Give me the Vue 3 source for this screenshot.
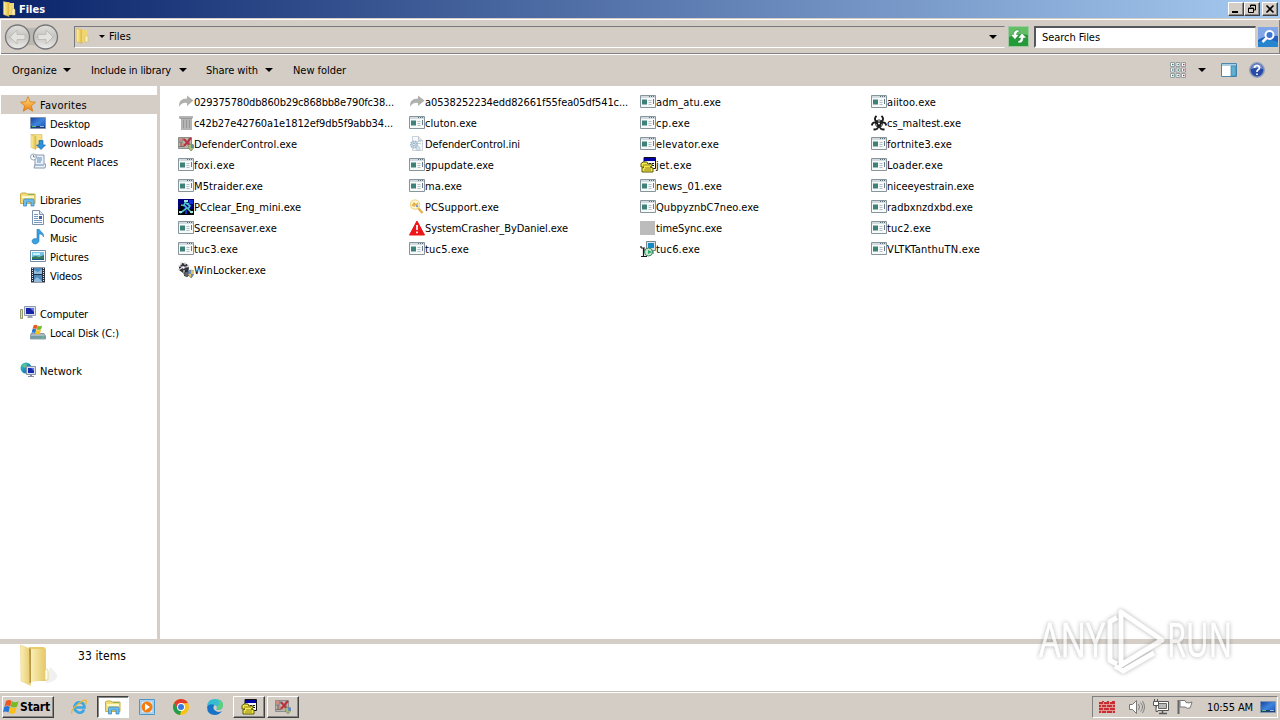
<script setup>
const vFit = {
  mounted(el, { value }) {
    const natural = el.getBoundingClientRect().width
    el.style.letterSpacing = (value - natural) / el.textContent.length + 'px'
  }
}
const menu = [
  { t: 'Organize', w: 45, arrow: true },
  { t: 'Include in library', w: 80, arrow: true },
  { t: 'Share with', w: 52, arrow: true },
  { t: 'New folder', w: 53 }
]
const groups = [
  { t: 'Favorites', w: 47, i: 'star', sel: true, items: [['Desktop', 40, 'desktop'], ['Downloads', 53, 'downloads'], ['Recent Places', 68, 'recent']] },
  { t: 'Libraries', w: 41, i: 'library', items: [['Documents', 54, 'doc'], ['Music', 27, 'music'], ['Pictures', 39, 'picture'], ['Videos', 32, 'video']] },
  { t: 'Computer', w: 48, i: 'computer', items: [['Local Disk (C:)', 69, 'disk']] },
  { t: 'Network', w: 42, i: 'network', items: [] }
]
const files = [
  ['029375780db860b29c868bb8e790fc38...', 200, 'arrow'], ['a0538252234edd82661f55fea05df541c...', 203, 'arrow'], ['adm_atu.exe', 65, 'exe'], ['aiitoo.exe', 49, 'exe'],
  ['c42b27e42760a1e1812ef9db5f9abb34...', 199, 'bin'], ['cluton.exe', 52, 'exe'], ['cp.exe', 34, 'exe'], ['cs_maltest.exe', 74, 'bio'],
  ['DefenderControl.exe', 103, 'defender'], ['DefenderControl.ini', 95, 'ini'], ['elevator.exe', 63, 'exe'], ['fortnite3.exe', 65, 'exe'],
  ['foxi.exe', 41, 'exe'], ['gpupdate.exe', 69, 'exe'], ['jet.exe', 36, 'jet'], ['Loader.exe', 56, 'exe'],
  ['M5traider.exe', 69, 'exe'], ['ma.exe', 37, 'exe'], ['news_01.exe', 66, 'exe'], ['niceeyestrain.exe', 87, 'exe'],
  ['PCclear_Eng_mini.exe', 107, 'pcclear'], ['PCSupport.exe', 74, 'support'], ['QubpyznbC7neo.exe', 103, 'exe'], ['radbxnzdxbd.exe', 86, 'exe'],
  ['Screensaver.exe', 83, 'exe'], ['SystemCrasher_ByDaniel.exe', 143, 'warn'], ['timeSync.exe', 66, 'gray'], ['tuc2.exe', 44, 'exe'],
  ['tuc3.exe', 44, 'exe'], ['tuc5.exe', 44, 'exe'], ['tuc6.exe', 44, 'setup'], ['VLTKTanthuTN.exe', 93, 'exe'],
  ['WinLocker.exe', 72, 'locker']
]
const tasks = [['ie', ''], ['library', 'active'], ['wmp', ''], ['chrome', ''], ['edge', ''], ['jet', 'raised'], ['defender', 'raised']]
</script>

<template>
  <div class="screen">
    <svg class="defs" width="0" height="0">
      <defs>
        <linearGradient id="gy" x1="0" x2="1"><stop offset="0" stop-color="#fff3a8" /><stop offset="1" stop-color="#dfb93e" /></linearGradient>
        <linearGradient id="gf" x1="0" x2="1"><stop offset="0" stop-color="#faeeb4" /><stop offset="1" stop-color="#e6cb70" /></linearGradient>
        <linearGradient id="gb" x1="0" y1="0" x2="1" y2="1"><stop offset="0" stop-color="#173f9c" /><stop offset=".5" stop-color="#3f85dc" /><stop offset="1" stop-color="#1a4fae" /></linearGradient>
        <linearGradient id="gs" x1="0" y1="0" x2="0" y2="1"><stop offset="0" stop-color="#ffe27a" /><stop offset="1" stop-color="#ee7d12" /></linearGradient>
        <linearGradient id="gn" x1="0" y1="0" x2="0" y2="1"><stop offset="0" stop-color="#e2e0dc" /><stop offset=".5" stop-color="#c6c4c0" /><stop offset="1" stop-color="#eeeeec" /></linearGradient>
        <linearGradient id="ge" x1="0" y1="0" x2="1" y2="1"><stop offset="0" stop-color="#37c7c4" /><stop offset="1" stop-color="#0b5cb8" /></linearGradient>
      </defs>
      <symbol id="folder" viewBox="0 0 16 16"><path d="M2 1h5l1 1h4v12H7z" fill="#f2d873" /><path d="M1.500.5l5.500 1.500v13.500l-5.500-2z" fill="url(#gy)" stroke="#d4b350" stroke-width=".5" /><path d="M7 2h4v12H7z" fill="#f0d573" /><path d="M10 8q3-1 3 1v5h-3z" fill="#faf0bd" stroke="#cfb353" stroke-width=".5" /></symbol>
      <symbol id="star" viewBox="0 0 16 16"><path d="M8 .7l2.100 5 5.400.5-4.100 3.600 1.300 5.400L8 12.300l-4.700 2.900 1.300-5.400L.5 6.200l5.400-.5z" fill="url(#gs)" stroke="#d47d1c" stroke-width=".8" /></symbol>
      <symbol id="desktop" viewBox="0 0 16 16"><path d="M.5 2.500h15v11H.5z" fill="url(#gb)" stroke="#8495b4" /><path d="M1 11h14v2H1z" fill="#1d3e76" /><path d="M2 11h4v1H2z" fill="#54c66c" /><path d="M10 11h4v1h-4z" fill="#9cbbe1" /></symbol>
      <symbol id="downloads" viewBox="0 0 16 16"><path d="M1 .5h11v13H5z" fill="#f5df87" stroke="#d7b95a" stroke-width=".6" /><path d="M1 .5l5 2v13l-5-2z" fill="url(#gy)" stroke="#d4b350" stroke-width=".5" /><path d="M9 6.500h4V11h2.500L11 15.500 6.500 11H9z" fill="#2e91db" stroke="#1767a8" stroke-width=".7" /></symbol>
      <symbol id="recent" viewBox="0 0 16 16"><path d="M5 2h9v9h2l-1 4H4l1-4z" fill="#edf2f8" stroke="#8798ad" /><path d="M7 5h5M7 7h5M7 9h4M5 12h9" stroke="#5e89bd" /><circle cx="3.500" cy="4" r="3" fill="#fff" stroke="#91a4ba" /><path d="M3.500 2v2h2" fill="none" stroke="#4e6987" stroke-width=".8" /></symbol>
      <symbol id="library" viewBox="0 0 16 16"><path d="M.5 12.500V3l1-1H6l1 1h8v9.500z" fill="#f2dc79" stroke="#c8ac46" /><path d="M2 5h12v2H2z" fill="#fff8cb" /><path d="M8 3h6v1H8z" fill="#80b65e" /><path d="M3.500 15V9.500Q3.500 8 5 8h7.500Q14 8 14 9.500V15h-3v-4H6.500v4z" fill="#6dbcec" stroke="#388ac1" stroke-width=".8" /></symbol>
      <symbol id="doc" viewBox="0 0 16 16"><path d="M2.500.5h7l4 4v10h-11z" fill="#fafcff" stroke="#7b91ad" /><path d="M9.500.5v4h4" fill="#d6e4f5" stroke="#7b91ad" /><path d="M4 4.500h4M4 6.500h4M4 8.500h4M4 10.500h8M4 12.500h8" stroke="#7697bf" /><path d="M9 6h3v3H9z" fill="#3c66a3" /></symbol>
      <symbol id="music" viewBox="0 0 16 16"><path d="M7 0h2c1 3 5 3 4.500 8-1-3-3-3-4.500-3v7c-1 4-7 4-7 0 0-2 3-3 5-2z" fill="#3aa0e0" stroke="#2178b8" stroke-width=".6" /></symbol>
      <symbol id="picture" viewBox="0 0 16 16"><path d="M.5 2.500h15v11H.5z" fill="#fff" stroke="#718ba9" /><path d="M2 4h12v8H2z" fill="#76c4e6" /><path d="M2 9l4-1 3 1 5-2v5H2z" fill="#367b5b" /><path d="M2 11h12v1H2z" fill="#185987" /><path d="M3 5h7v2H3z" fill="#c9eff7" /></symbol>
      <symbol id="video" viewBox="0 0 16 16"><path d="M1 .5h14v15H1z" fill="#29323e" /><path d="M4 1h8v6H4zM4 8h8v7H4z" fill="#4b8bbf" /><path d="M4 3l4 2 4-3v5H4zM4 13l3-3 5 4v1H4z" fill="#8ebbdc" /><path d="M2.500 1v14M13.500 1v14" stroke="#e1e7ed" stroke-width="1" stroke-dasharray="1 1" /></symbol>
      <symbol id="computer" viewBox="0 0 16 16"><path d="M.5 4.500h2v9h-2z" fill="#d8dfbf" stroke="#92996e" /><path d="M4.500 1.500h11v9h-11z" fill="#dce1ed" stroke="#8d98b1" /><path d="M6 3h8v6H6z" fill="#1724a5" /><path d="M10 3h4v4z" fill="#6178e0" /><path d="M8 11h4l1 2H7z" fill="#9ba5b7" /></symbol>
      <symbol id="disk" viewBox="0 0 16 16"><path d="M1 9.500h13l1.500 2.500v3H.5v-3z" fill="#a9bac2" stroke="#6c808a" stroke-width=".7" /><path d="M1 12h14v2.500H1z" fill="#729ba2" /><path d="M12 12.500h2v1h-2z" fill="#56da75" /><use href="#win" x="1.500" y="0" width="11" height="11" /></symbol>
      <symbol id="win" viewBox="0 0 16 16"><path d="M3 2q3-2 5.700 0L7.200 7.500Q4 5.500 1.500 7.500z" fill="#ed5724" /><path d="M9 2.200q3 2 6.500 0L14 7.800q-3.500 1.500-6.500 0z" fill="#78b928" /><path d="M1.200 8q3-2 5.700 0L5.400 13.500Q2 11.500 0 13.500z" fill="#2676d6" /><path d="M7.200 8.300q3 2 6.500 0L12.300 14q-3 1.500-6.500 0z" fill="#fbbf17" /></symbol>
      <symbol id="network" viewBox="0 0 16 16"><circle cx="6" cy="6" r="5.500" fill="url(#ge)" /><path d="M2 3l4-2 1 3-2 2-2-1zM7 7h3l-2 4H6z" fill="#5fc38a" /><path d="M6.500 4.500h9v8h-9z" fill="#d9e1ef" stroke="#8391ab" /><path d="M8 6h6v5H8z" fill="#1a2cae" /><path d="M11 6h3v3z" fill="#6178e0" /><path d="M10 13h2v1h2v1H8v-1h2z" fill="#7f8da7" /></symbol>
      <symbol id="exe" viewBox="0 0 16 16"><path d="M.5 1.500h15v12H.5z" fill="#f8fafa" stroke="#87949c" /><path d="M1 2h14v2H1z" fill="#d2dce0" /><path d="M9 2.500h1M11 2.500h1M13 2.500h1" stroke="#5a6e78" /><path d="M2 5.500h5v5H2z" fill="#3c8278" /><path d="M8.500 6.500h3M8.500 8.500h3M8.500 10.500h3" stroke="#b2bec9" /><path d="M13.500 5v5" stroke="#687987" /></symbol>
      <symbol id="arrow" viewBox="0 0 16 16"><path d="M9 1.500l6.500 5L9 12V9Q4 8 1 13 0 4.500 9 4.500z" fill="#b0b0ae" /></symbol>
      <symbol id="bin" viewBox="0 0 16 16"><path d="M1 1h14v2.500h-1V15H3V3.500H1z" fill="#b4b4b4" /><path d="M2 3.500h12M5.500 5v8M8.500 5v8M11.500 5v8" stroke="#979797" /></symbol>
      <symbol id="bio" viewBox="0 0 16 16"><g fill="none" stroke="#1c1c1c"><path d="M5.500.8Q2.500 4 5.200 6.300 8 8.500 10.800 6.300 13.500 4 10.500.8" stroke-width="1.900" /><path d="M.8 10.500Q1.500 6.800 4.500 7.500 8 9 7 12.500 6 15 2.500 14.300" stroke-width="1.900" /><path d="M15.200 10.500Q14.500 6.800 11.500 7.500 8 9 9 12.500 10 15 13.500 14.300" stroke-width="1.900" /><circle cx="8" cy="8.500" r="3.600" stroke-width=".9" /></g><circle cx="8" cy="8.300" r=".9" fill="#fff" /></symbol>
      <symbol id="defender" viewBox="0 0 16 16"><path d="M.5 1.500h13v11H.5z" fill="#b9b7b3" stroke="#8d8e88" /><path d="M1 2h4v3H1zM2 7h4v3H2z" fill="#cd8e83" /><path d="M1 6h4M1 10.500h5M5 2v3M3 6v4M11 2v9" stroke="#77716b" /><path d="M6 3l7 8M13 2l-7 8" stroke="#bd3040" stroke-width="2" /><path d="M10 9l3-1 3 1q0 4-3 6-3-2-3-6z" fill="#a8bd71" stroke="#68775a" stroke-width=".5" /><path d="M13 8l3 1v3h-3z" fill="#6489bd" /></symbol>
      <symbol id="ini" viewBox="0 0 16 16"><path d="M3.500.5h6l4 4v10h-10z" fill="#f8f9fb" stroke="#bfc6cf" stroke-width=".8" /><path d="M9.500.5v4h4" fill="#e1e6ec" stroke="#b4bec9" stroke-width=".8" /><path d="M7 5.500h5M8 7.500h4" stroke="#cbd3dc" /><circle cx="5" cy="8.500" r="3.200" fill="#d6e5f0" stroke="#9ab5ca" stroke-width="1.700" stroke-dasharray="1.500 .7" /><circle cx="5" cy="8.500" r="1.200" fill="#fff" stroke="#718fa9" stroke-width=".7" /><circle cx="9" cy="12.500" r="2" fill="#d8e5ee" stroke="#9db5c8" stroke-dasharray="1 .6" /></symbol>
      <symbol id="jet" viewBox="0 0 16 16"><path d="M4 .5h11.500v11H4z" fill="#f7f7f7" stroke="#111" /><path d="M4 1h11v3H4z" fill="#0000a6" /><path d="M6 6.500h2M9 6.500h2M12 6.500h2M12 8.500h2" stroke="#111" /><path d="M1 6.500l2-1.500h4l1 2h4v2l-2 1 3 1v4H2v-4l2-1H1z" fill="#f5e94e" stroke="#5d5600" /><path d="M3 8h7M5 11h6M4 13h7" stroke="#8e8519" /></symbol>
      <symbol id="pcclear" viewBox="0 0 16 16"><path d="M0 0h16v16H0z" fill="#00007f" /><path d="M0 10h16v6H0zM2 5h4v5H2z" fill="#020407" /><path d="M8 2l-2 4 3 3-4 3-3 2M8 4l4 3-2 3 4 4M3 6l5 1M9 5l4-1" fill="none" stroke="#50c4cd" stroke-width="1.600" /><path d="M6 1h4v2H6zM1 12h3v2H1zM12 12h3v2h-3z" fill="#a5e3df" /><path d="M11 1h4v4h-4zM7 11h2v4H7z" fill="#1330d6" /></symbol>
      <symbol id="support" viewBox="0 0 16 16"><path d="M9 9l4.500 5" stroke="#e4b24e" stroke-width="2.500" /><circle cx="6" cy="5.500" r="4.600" fill="#fff9da" stroke="#f0d792" stroke-width="1.300" /><path d="M3 7l2-3 2 2 2-2M5 4v4" fill="none" stroke="#e3ad36" stroke-width="1.300" /><circle cx="8" cy="7" r="1.300" fill="#8aa2b5" /></symbol>
      <symbol id="warn" viewBox="0 0 16 16"><path d="M8 1l7.500 14H.5z" fill="#ec1519" stroke="#ec1519" stroke-linejoin="round" /><path d="M8 5v5M8 11.500v1.800" stroke="#fff" stroke-width="1.700" /></symbol>
      <symbol id="gray" viewBox="0 0 16 16"><path d="M0 1h15v14H0z" fill="#bcbcbc" /></symbol>
      <symbol id="setup" viewBox="0 0 16 16"><path d="M6.500.5h9v9h-9z" fill="#dce1e4" stroke="#71838c" /><path d="M8 2h6v5H8z" fill="#178ac4" /><path d="M8 10h6v3H8z" fill="#aaa" /><circle cx="8.500" cy="11" r="4" fill="#c6e6ce" stroke="#318863" /><path d="M8 9l4 2-4 2z" fill="#28a965" /><path d="M1 7h4M3.500 7v8M1 15.500h6M5 9H3M1 5v2" fill="none" stroke="#181818" stroke-width="1.200" /></symbol>
      <symbol id="locker" viewBox="0 0 16 16"><path d="M1 5l3-4 5 1 2 4-1 5-5 0-4-3z" fill="#33343a" /><path d="M0 4h3M3 0v3M7 0v3M11 3l-2 2M0 8l4-2M6 12V8M3 5h2M7 5h2" stroke="#d5d7dc" stroke-width="1.200" /><circle cx="5.500" cy="5.500" r="1.300" fill="#fff" /><circle cx="8.500" cy="12" r="2.500" fill="#62646a" stroke="#111" stroke-dasharray="1.500 1" /><path d="M10 9l3-1 3 1q0 5-3 7-3-2-3-7z" fill="#6b8fc6" stroke="#4c5b6e" stroke-width=".5" /><path d="M13 8l3 1v3h-3zM10 12h3v4z" fill="#e5c75b" /></symbol>
      <symbol id="ie" viewBox="0 0 16 16"><path d="M13 10.500Q11.500 14.500 7.500 13.500 2.500 11.500 3.500 7 5.500 2.500 10 3.500 13.500 4.500 13.500 8.500H4" fill="none" stroke="#3aa7e4" stroke-width="2.600" /><path d="M1 15q-2-3 5-9T15.200 1.500q1 2-1.500 4" fill="none" stroke="#e9b834" stroke-width="1.300" /></symbol>
      <symbol id="wmp" viewBox="0 0 16 16"><path d="M.5.5h15v15H.5z" fill="#c6e1f5" stroke="#4c96c8" /><path d="M2 2h12v12H2z" fill="#dceefa" stroke="#72afd7" stroke-width=".7" /><circle cx="8" cy="8" r="5.500" fill="#f27e13" /><path d="M6 4.500l5 3.500-5 3.500z" fill="#fff" /></symbol>
      <symbol id="chrome" viewBox="0 0 16 16"><circle cx="8" cy="8" r="8" fill="#fbc116" /><path d="M1 4q2.500-4 7-4t7 4l-7 .5L4.500 10z" fill="#e33b2e" /><path d="M1 4l4 6 3 2-1 4Q1 15 0 9-.2 6 1 4z" fill="#249d4b" /><circle cx="8" cy="8" r="4" fill="#fff" /><circle cx="8" cy="8" r="3" fill="#3979df" /></symbol>
      <symbol id="edge" viewBox="0 0 16 16"><path d="M.2 8Q0 0 8 0q8 .2 8 6 0 5-5 5-2 0-1.500-1Q11 6 6 6q-4 0-6 3z" fill="#37bdd0" /><path d="M.1 8Q0 16 8 16q4 0 7-4-4 2-7-.5Q5 9 7.500 6 2 4 .1 8z" fill="#1673c7" /><path d="M11 .7q5 1.300 5 5.300t-5 5q-2 0-1.500-1 2-1 1-3 3-2 .5-6.300z" fill="#62ce79" /></symbol>
      <symbol id="wall" viewBox="0 0 16 14"><path d="M0 2h3V1h2v1h3V1h2v1h3V1h3v12H0z" fill="#c82d33" /><path d="M0 4.500h16M0 7.500h16M0 10.500h16M4.500 2v2M10.500 2v2M2.500 5v2M7.500 5v2M13.500 5v2M4.500 8v2M10.500 8v2M2.500 11v2M7.500 11v2M13.500 11v2" stroke="#eec8bc" stroke-width=".7" /></symbol>
      <symbol id="sound" viewBox="0 0 16 16"><path d="M.5 5.500h3l4-4v13l-4-4h-3z" fill="#fff" stroke="#777" /><path d="M9.500 5q2 3 0 6M11.500 3.500q4 4.500 0 9M13.500 2q4 6 0 12" fill="none" stroke="#777" stroke-width=".9" /></symbol>
      <symbol id="lan" viewBox="0 0 16 16"><path d="M3.500 2.500h12v9h-12z" fill="#fff" stroke="#555" /><path d="M5.500 4.500h8v5h-8z" fill="#b9b9b7" stroke="#666" /><path d="M9.500 12v2M6 14.500h8" stroke="#555" stroke-width="1.500" /><path d="M.5 2.500h5v4h-5zM1.500 0v2M4.500 0v2M3 7v5.500h2" fill="#fff" stroke="#555" /></symbol>
      <symbol id="flag" viewBox="0 0 16 16"><path d="M1.500 1v14" stroke="#666" stroke-width="2" /><path d="M3 1.500h5l1 2q3 1 6-.5-1 4-2 6-3 1-5-1H3z" fill="#fff" stroke="#777" /></symbol>
    </svg>

    <header class="title">
      <svg class="ic" viewBox="0 0 16 16"><use href="#folder" /></svg><b v-fit="26">Files</b>
      <div class="wb">
        <i><svg viewBox="0 0 12 10"><path d="M2 8h6" stroke="#000" stroke-width="2" /></svg></i>
        <i><svg viewBox="0 0 12 10"><path d="M4.500 3V1h5v5h-2M4 1.500h6M2.500 4v4.500h5V4zM2 4.500h6" fill="none" stroke="#000" /></svg></i>
        <i class="x"><svg viewBox="0 0 12 10"><path d="M2.500 1.500l7 7M9.500 1.500l-7 7" stroke="#000" stroke-width="1.600" /></svg></i>
      </div>
    </header>

    <div class="nav">
      <svg class="backs" width="56" height="28" viewBox="0 0 56 28">
        <path d="M13 3q14 4 29 0v21q-14-4-29 0z" fill="#bbb7b1" />
        <g fill="url(#gn)" stroke="#77777a" stroke-width="1.300"><circle cx="13.500" cy="14" r="12" /><circle cx="41.500" cy="14" r="12" /></g>
        <g fill="#e4e2df" stroke="#b3b1ad" stroke-width=".7"><path d="M13 7l-7 7 7 7v-4.500h8v-5h-8zM42 7l7 7-7 7v-4.500h-8v-5h8z" /></g>
      </svg>
      <div class="addr"><svg class="ic" viewBox="0 0 16 16"><use href="#folder" /></svg><s class="tri small"></s><span v-fit="22">Files</span><s class="tri end"></s></div>
      <svg class="refresh" width="21" height="21" viewBox="0 0 21 21"><path d="M.5.5h20v20H.5z" fill="#249b38" stroke="#9fc9a2" /><path d="M1 1h19v8Q10 6 1 11z" fill="#63bf65" /><path d="M11 4Q5.500 3.500 5.500 8.500H2.500L7 13.500l4-5H8.500Q8.500 6 11 6zM10 17q5.500.5 5.500-5h3L14 7l-4 5h2.500q0 3-2.500 3z" fill="#fff" stroke="#21833a" stroke-width=".5" /></svg>
      <div class="search"><span v-fit="58">Search Files</span></div>
      <svg class="mag" width="20" height="20" viewBox="0 0 20 20"><path d="M0 0h20v20H0z" fill="#2360c4" /><path d="M0 0h20v9Q10 7 0 13z" fill="#80a6e7" /><path d="M0 15q10-4 20 0v5H0z" fill="#2784cf" /><circle cx="11.500" cy="8" r="4" fill="#3c73d4" stroke="#fff" stroke-width="2" /><path d="M8.500 11l-4 4" stroke="#fff" stroke-width="2.500" /></svg>
    </div>

    <div class="tools">
      <div v-for="m in menu" :key="m.t" class="m"><span v-fit="m.w">{{ m.t }}</span><s v-if="m.arrow" class="tri"></s></div>
      <div class="views">
        <svg width="16" height="16" viewBox="0 0 16 16"><g fill="#fff" stroke="#8f9698" stroke-width=".9"><path d="M.5.5h4v4h-4zM6 .5h4v4H6zM11.500.5h4v4h-4zM.5 6h4v4h-4zM6 6h4v4H6zM11.500 6h4v4h-4zM.5 11.500h4v4h-4zM6 11.500h4v4H6zM11.500 11.500h4v4h-4z" /></g><path d="M2 2.500h1.500M7.500 8H9M2 13.500h1.500" stroke="#388269" stroke-width="1.500" /><path d="M7.500 2.500H9M2 8h1.500M7.500 13.500H9" stroke="#56778c" stroke-width="1.500" /><path d="M13 2.500h1.500M13 8h1.500M13 13.500h1.500" stroke="#a33740" stroke-width="1.500" /></svg>
        <s class="tri"></s>
        <svg width="16" height="14" viewBox="0 0 16 14"><path d="M.5.5h15v13H.5z" fill="#fff" stroke="#4c86aa" /><path d="M1 1h14v2H1z" fill="#a9cee2" /><path d="M10 3h5v10h-5z" fill="#62afd4" stroke="#317fa9" stroke-width=".7" /></svg>
        <svg class="help" width="16" height="16" viewBox="0 0 16 16"><circle cx="8" cy="8" r="7.200" fill="#2949a8" stroke="#8e9db9" stroke-width="1.500" /><path d="M2 7q1-5 6-5t6 5q-6-2-12 0z" fill="#7790d1" /><path d="M5.500 6q0-2.500 2.500-2.500T10.500 6Q10.500 7 8.800 8 8 8.500 8 10M8 11.500V13" fill="none" stroke="#fff" stroke-width="1.700" /></svg>
      </div>
    </div>

    <main class="body">
      <aside>
        <section v-for="g in groups" :key="g.t">
          <div class="row" :class="{ sel: g.sel }"><svg class="ic" viewBox="0 0 16 16"><use :href="'#' + g.i" /></svg><span v-fit="g.w">{{ g.t }}</span></div>
          <div v-for="c in g.items" :key="c[0]" class="row child"><svg class="ic" viewBox="0 0 16 16"><use :href="'#' + c[2]" /></svg><span v-fit="c[1]">{{ c[0] }}</span></div>
        </section>
      </aside>
      <div class="files">
        <div v-for="f in files" :key="f[0]" class="file"><svg class="ic" viewBox="0 0 16 16"><use :href="'#' + f[2]" /></svg><span v-fit="f[1]">{{ f[0] }}</span></div>
      </div>
    </main>

    <footer class="details">
      <svg width="42" height="44" viewBox="0 0 42 44"><path d="M27 37l4-14q10 8 6 12-3 3-10 4z" fill="#ddd" opacity=".45" /><path d="M10 3h15l2 2v32H10z" fill="#e9cd6c" /><path d="M1.500 1l10 4v36.500L2 37z" fill="url(#gf)" stroke="#ead38a" stroke-width=".6" /><path d="M10 4l2 1v34h-1.500z" fill="#b99843" /><path d="M12 5h13.500v31L12 38z" fill="url(#gf)" /><path d="M26 26q3-2 3 1v9h-3z" fill="#fffdee" stroke="#decb74" stroke-width=".7" /></svg>
      <span v-fit="48">33 items</span>
    </footer>

    <nav class="taskbar">
      <div class="start"><svg width="16" height="16" viewBox="0 0 16 16"><use href="#win" /></svg><b v-fit="30">Start</b></div>
      <div v-for="t in tasks" :key="t[0]" class="task" :class="t[1]"><svg class="ic" viewBox="0 0 16 16"><use :href="'#' + t[0]" /></svg></div>
      <div class="tray">
        <svg class="t1" width="16" height="14"><use href="#wall" /></svg>
        <svg class="t2" width="16" height="16"><use href="#sound" /></svg>
        <svg class="t3" width="16" height="16"><use href="#lan" /></svg>
        <svg class="t4" width="16" height="16"><use href="#flag" /></svg>
        <span v-fit="46">10:55 AM</span>
        <svg class="t5" width="16" height="16"><use href="#desktop" /></svg>
      </div>
    </nav>

    <svg class="mark" width="206" height="72" viewBox="0 0 206 72">
      <g class="letters"><text x="6" y="53" textLength="66" lengthAdjust="spacingAndGlyphs">ANY</text><text x="134" y="53" textLength="65" lengthAdjust="spacingAndGlyphs">RUN</text></g>
      <g class="logo"><path d="M84 13.500l-7 4v39l7 3.500" /><path d="M88 63V8l41 28-41 25" /><path d="M82 62l8 5 31-18" /></g>
    </svg>
  </div>
</template>

<style>
body { margin: 0; overflow: hidden; }
</style>
<style scoped>
.screen { position: relative; width: 1280px; height: 720px; overflow: hidden; display: flex; flex-direction: column; background: #fff; color: #000; font: 11px/15px "DejaVu Sans Condensed", "DejaVu Sans", sans-serif; font-stretch: condensed; }
.defs { position: absolute; }
span, b { white-space: nowrap; display: inline-block; flex: none; }
svg { flex: none; display: block; }
.ic { width: 16px; height: 16px; }
.title { height: 18px; flex: none; display: flex; align-items: center; padding: 0 2px; background: linear-gradient(90deg, #0a246a, #a6caf0); color: #fff; box-sizing: border-box; }
.title b { margin-left: 1px; }
.wb { display: flex; margin-left: auto; }
.wb i { width: 16px; height: 14px; box-sizing: border-box; background: #d4cec7; border: 1px solid; border-color: #fff #404040 #404040 #fff; box-shadow: inset -1px -1px #888; }
.wb i svg { width: 12px; height: 10px; margin: 1px; }
.wb .x { margin-left: 2px; }
.nav { height: 37px; flex: none; box-sizing: border-box; background: #d4cdc6; border-top: 1px solid #d4cdc6; border-bottom: 1px solid #fff; box-shadow: inset 0 1px #fff, inset 1px 0 #fff, inset 0 -1px #808080, inset -1px 0 #808080; display: flex; align-items: center; padding-left: 4px; }
.addr { width: 931px; height: 22px; margin-left: 14px; box-sizing: border-box; border: 1px solid; border-color: #77797c #d4cdc6 #fff #77797c; display: flex; align-items: center; }
.addr span { margin-left: 4px; }
.addr .ic { margin-bottom: 2px; }
.tri { width: 0; height: 0; border: 4px solid transparent; border-top-color: #000; border-bottom: 0; margin-left: 7px; flex: none; }
.tri.small { border-width: 3px 3px 0; margin-left: 8px; }
.tri.end { margin-left: auto; margin-right: 7px; }
.refresh { margin-left: 3px; }
.search { width: 222px; height: 22px; margin-left: 5px; box-sizing: border-box; border: 2px solid; border-color: #55585b #d4cdc6 #fff #55585b; border-right-width: 1px; background: #fff; padding: 2px 0 0 6px; }
.mag { margin-left: 2px; }
.tools { height: 31px; flex: none; background: #d4cdc6; display: flex; align-items: center; padding-left: 12px; box-sizing: border-box; padding-bottom: 1px; }
.m { display: flex; align-items: center; margin-right: 19px; }
.m:nth-child(1) { margin-right: 20px; }
.m:nth-child(3) { margin-right: 20px; }
.m .tri { margin-left: 6px; }
.m:nth-child(2) .tri { margin-left: 8px; }
.m:nth-child(3) .tri { margin-left: 7px; }
.views { display: flex; align-items: center; margin-left: auto; padding-right: 15px; }
.views .tri { margin: 0 15px 0 12px; }
.help { margin-left: 12px; }
.body { height: 553px; flex: none; display: flex; }
aside { width: 160px; box-sizing: border-box; border-right: 3px solid #d4cec7; padding: 9px 0 0 1px; }
section { margin-bottom: 19px; }
.row { height: 19px; display: flex; align-items: center; padding-left: 19px; }
.row span { margin: 2px 0 0 4px; }
.row.child { padding-left: 29px; }
.row .ic { margin-bottom: 1px; }
.sel { background: #d4cec7; }
.files { padding: 6px 0 0 18px; display: grid; grid-template-columns: repeat(4, 231px); grid-auto-rows: 21px; align-content: start; }
.file { display: flex; align-items: center; }
.file .ic { margin-bottom: 1px; }
.details { height: 53px; flex: none; border-top: 5px solid #d4cec7; border-bottom: 1px solid #c3beb8; box-sizing: border-box; display: flex; padding-left: 19px; font-size: 12px; }
.details span { margin: 5px 0 0 17px; }
.taskbar { height: 28px; flex: none; background: #d4cdc6; border-top: 1px solid #fff; box-sizing: border-box; display: flex; align-items: center; padding: 1px 2px 0; }
.start { height: 22px; width: 52px; box-sizing: border-box; border: 1px solid; border-color: #fff #404040 #404040 #fff; box-shadow: inset -1px -1px #888; display: flex; align-items: center; margin-right: 9px; }
.start b { margin-left: 1px; font-size: 12px; }
.task { width: 32px; height: 22px; display: grid; place-items: center; margin-right: 2px; box-sizing: border-box; border: 1px solid transparent; }
.raised { border-color: #fff #404040 #404040 #fff; box-shadow: inset -1px -1px #888; }
.active { background: #fff; border-color: #404040 #fff #fff #404040; box-shadow: inset 1px 1px #888; }
.tray { margin-left: auto; width: 186px; height: 22px; box-sizing: border-box; border: 1px solid; border-color: #808080 #fff #fff #808080; display: flex; align-items: center; padding-left: 6px; }
.t2 { margin-left: 14px; }
.t3 { margin-left: 8px; }
.t4 { margin-left: 8px; }
.tray span { margin-left: 14px; }
.t5 { margin-left: 7px; }
.mark { position: absolute; left: 1033px; top: 604px; overflow: visible; filter: drop-shadow(0 0 2px rgba(70, 70, 70, .6)); opacity: .7; }
.letters { font: 400 47px "Open Sans", sans-serif; fill: #fff; stroke: #fff; stroke-width: .7; }
.logo { fill: none; stroke: #fff; stroke-width: 5; stroke-linejoin: round; }
</style>
